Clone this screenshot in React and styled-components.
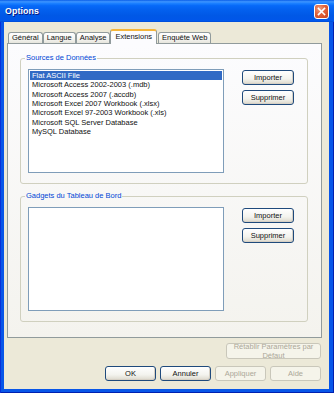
import React from 'react';
import styled, { createGlobalStyle } from 'styled-components';

const GlobalStyle = createGlobalStyle`
  * { box-sizing: border-box; }
  html, body { margin: 0; padding: 0; background: #3a6ea5; }
  body { font-family: "Liberation Sans", Arial, sans-serif; font-size: 7.5px; }
`;

const Window = styled.div`
  width: 334px;
  height: 393px;
  display: flex;
  flex-direction: column;
  background: #0856e8;
  box-shadow: inset 1px 0 #0831d9, inset -1px 0 #0020b0, inset 0 -1px #0020b0;
  overflow: hidden;
`;

const TitleBar = styled.div`
  flex: none;
  height: 22px;
  display: flex;
  align-items: center;
  justify-content: space-between;
  padding: 0 5px 0 5px;
  background: linear-gradient(180deg, #0a5ee8 0%, #3d95ff 8%, #1a7fff 16%, #0669f8 26%, #0360ee 45%, #0058e6 70%, #0056e8 88%, #0059ee 95%, #0048cf 100%);
`;

const Title = styled.span`
  color: #fff;
  font-weight: bold;
  font-size: 8.8px;
  text-shadow: 1px 1px #0a1883;
  letter-spacing: 0.1px;
`;

const CloseButton = styled.div`
  width: 15px;
  height: 15px;
  display: flex;
  align-items: center;
  justify-content: center;
  border: 1px solid #fff;
  border-radius: 3px;
  background: radial-gradient(circle at 35% 30%, #f0a080 0%, #e2613a 45%, #c8441d 100%);
`;

const Client = styled.div`
  flex: 1;
  display: flex;
  flex-direction: column;
  margin: 0 5px 4px 4px;
  padding: 7px 7px 0 3px;
  background: #ece9d8;
`;

const TabStrip = styled.div`
  display: flex;
  align-items: flex-end;
  height: 15px;
  margin-bottom: -1px;
  padding-left: 1px;
  position: relative;
  z-index: 1;
`;

const Tab = styled.div`
  height: ${p => (p.$active ? 15 : 11)}px;
  margin: ${p => (p.$active ? '0 1px 0 0' : '0 0 1px 0')};
  padding: 0 ${p => (p.$active ? 4 : 3)}px;
  line-height: ${p => (p.$active ? 12 : 10)}px;
  white-space: nowrap;
  color: #111;
  border: 1px solid #919b9c;
  border-bottom: none;
  border-top: ${p => (p.$active ? '2px solid #f5b53a' : '1px solid #919b9c')};
  border-radius: 3px 3px 0 0;
  background: ${p => (p.$active ? '#fcfcfe' : 'linear-gradient(#ffffff, #f4f4f0 60%, #e6e5dc)')};
`;

const Panel = styled.div`
  display: flex;
  flex-direction: column;
  gap: 7px;
  padding: 9px 13px 15px 12px;
  border: 1px solid #919b9c;
  background: linear-gradient(#fcfcfe, #f4f3ee);
`;

const Group = styled.fieldset`
  margin: 0;
  min-width: 0;
  padding: 6px 13px 10px 7px;
  border: 1px solid #d0d0bf;
  border-radius: 3px;
`;

const Legend = styled.legend`
  margin-left: -3px;
  padding: 0 1px;
  line-height: 10px;
  color: #0046d5;
`;

const GroupRow = styled.div`
  display: flex;
  gap: 18px;
`;

const ListBox = styled.ul`
  width: 196px;
  height: 104px;
  margin: 0;
  padding: 1px;
  list-style: none;
  border: 1px solid #7f9db9;
  background: #fff;
`;

const Item = styled.li`
  height: 9.33px;
  line-height: 9.33px;
  padding-left: 2px;
  white-space: nowrap;
  color: ${p => (p.$selected ? '#fff' : '#111')};
  background: ${p => (p.$selected ? '#316ac5' : 'transparent')};
`;

const ButtonColumn = styled.div`
  display: flex;
  flex-direction: column;
  gap: 5px;
  padding-top: 1px;
`;

const Button = styled.button`
  width: ${p => p.$w || 52}px;
  height: ${p => p.$h || 15}px;
  padding: 0;
  display: flex;
  align-items: center;
  justify-content: center;
  font-family: "Liberation Sans", Arial, sans-serif;
  font-size: 7.5px;
  line-height: 9px;
  text-align: center;
  border-radius: 3px;
  overflow: visible;
  color: ${p => (p.disabled ? '#aca899' : '#111')};
  border: 1px solid ${p => (p.disabled ? '#c9c7ba' : '#1f4a7c')};
  background: ${p => (p.disabled ? '#f5f4ea' : 'linear-gradient(#ffffff, #f3f3ee 60%, #dcd8cc)')};
  box-shadow: ${p => (p.disabled ? 'none' : 'inset -1px -1px #d6d0c5')};
`;

const Footer = styled.div`
  display: flex;
  flex-direction: column;
  align-items: flex-end;
  gap: 7px;
  padding: 5px 1px 0 0;
`;

const ButtonRow = styled.div`
  display: flex;
  gap: 4px;
`;

const sources = [
  'Flat ASCII File',
  'Microsoft Access 2002-2003 (.mdb)',
  'Microsoft Access 2007 (.accdb)',
  'Microsoft Excel 2007 Workbook (.xlsx)',
  'Microsoft Excel 97-2003 Workbook (.xls)',
  'Microsoft SQL Server Database',
  'MySQL Database',
];

const tabs = ['Général', 'Langue', 'Analyse', 'Extensions', 'Enquête Web'];

function GroupBox({ title, items }) {
  return (
    <Group>
      <Legend>{title}</Legend>
      <GroupRow>
        <ListBox>
          {items.map((it, i) => (
            <Item key={it} $selected={i === 0}>{it}</Item>
          ))}
        </ListBox>
        <ButtonColumn>
          <Button>Importer</Button>
          <Button>Supprimer</Button>
        </ButtonColumn>
      </GroupRow>
    </Group>
  );
}

export default function App() {
  return (
    <>
      <GlobalStyle />
      <Window>
        <TitleBar>
          <Title>Options</Title>
          <CloseButton>
            <svg width="9" height="9" viewBox="0 0 9 9">
              <path d="M1.5 1.5 L7.5 7.5 M7.5 1.5 L1.5 7.5" stroke="#fff" strokeWidth="1.6" strokeLinecap="square" />
            </svg>
          </CloseButton>
        </TitleBar>
        <Client>
          <TabStrip>
            {tabs.map(t => (
              <Tab key={t} $active={t === 'Extensions'}>{t}</Tab>
            ))}
          </TabStrip>
          <Panel>
            <GroupBox title="Sources de Données" items={sources} />
            <GroupBox title="Gadgets du Tableau de Bord" items={[]} />
          </Panel>
          <Footer>
            <Button disabled $w={95} $h={16}>Rétablir Paramètres par Défaut</Button>
            <ButtonRow>
              <Button $w={51}>OK</Button>
              <Button $w={51}>Annuler</Button>
              <Button $w={51} disabled>Appliquer</Button>
              <Button $w={51} disabled>Aide</Button>
            </ButtonRow>
          </Footer>
        </Client>
      </Window>
    </>
  );
}
